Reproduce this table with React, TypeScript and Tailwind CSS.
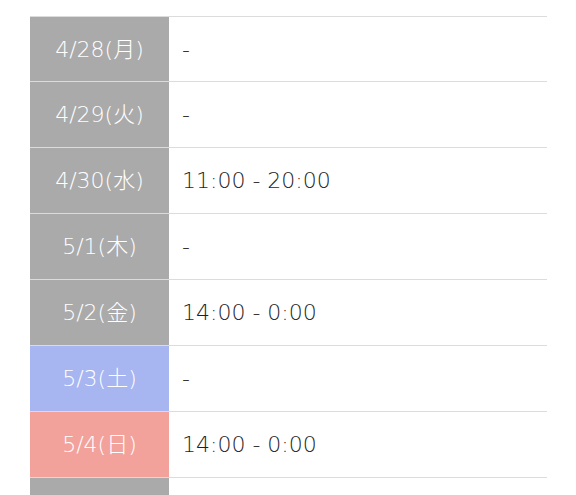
import React from 'react';

type Day = { date: string; hours: string; kind?: 'sat' | 'sun' };

const DAYS: Day[] = [
  { date: '4/28(月)', hours: '-' },
  { date: '4/29(火)', hours: '-' },
  { date: '4/30(水)', hours: '11:00 - 20:00' },
  { date: '5/1(木)', hours: '-' },
  { date: '5/2(金)', hours: '14:00 - 0:00' },
  { date: '5/3(土)', hours: '-', kind: 'sat' },
  { date: '5/4(日)', hours: '14:00 - 0:00', kind: 'sun' },
  { date: '5/5(月)', hours: '-' },
];

const DATE_BG: Record<string, string> = {
  sat: 'bg-[#a7b5f0]',
  sun: 'bg-[#f2a29b]',
};

export default function App() {
  return (
    <div
      className="w-[576px] h-[495px] overflow-hidden bg-white"
      style={{ fontFamily: '"DejaVu Sans", "Noto Sans CJK JP", sans-serif' }}
    >
      <div className="ml-[30px] mt-[16px] w-[517px] border-t border-[#dcdcdc]">
        {DAYS.map((day, i) => (
          <div
            key={day.date}
            className={`flex border-b border-[#dcdcdc] ${i === 0 ? 'h-[65px]' : 'h-[66px]'}`}
          >
            <div
              className={`w-[139px] shrink-0 flex items-center justify-center text-[22px] font-extralight text-white ${
                day.kind ? DATE_BG[day.kind] : 'bg-[#aaaaaa]'
              }`}
            >
              {day.date}
            </div>
            <div className="flex-1 flex items-center pl-[13px] text-[22px] font-extralight text-[#1f1f1f]">
              {day.hours}
            </div>
          </div>
        ))}
      </div>
    </div>
  );
}
